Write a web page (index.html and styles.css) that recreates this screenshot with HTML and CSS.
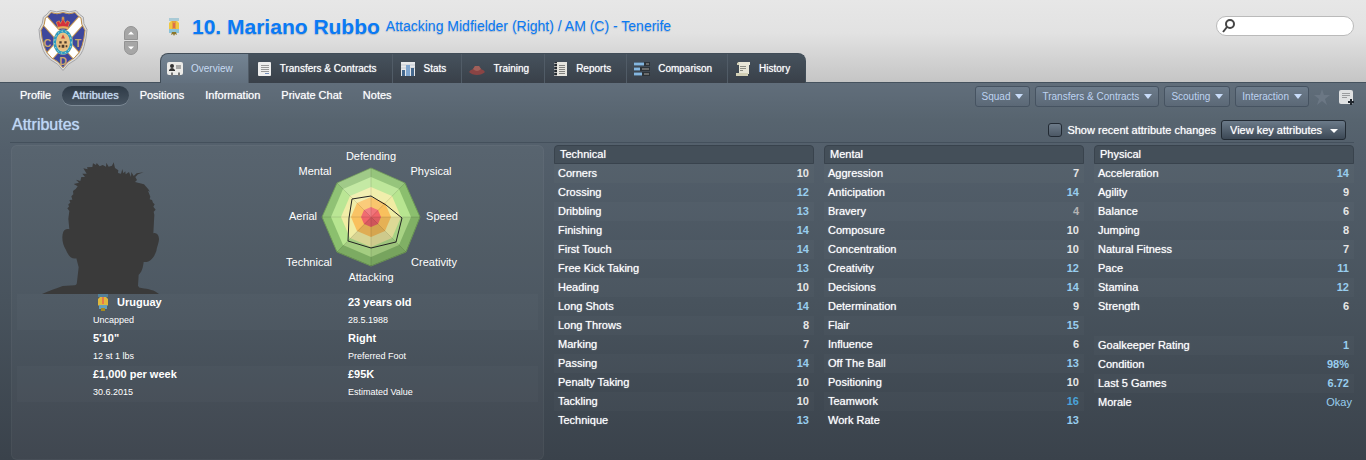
FILE: index.html
```html
<!DOCTYPE html>
<html lang="en">
<head>
  <meta charset="UTF-8">
  <title>Mariano Rubbo - Attributes</title>
  <link rel="stylesheet" href="styles.css">
</head>
<body>
  <header class="top">
    <div class="club">
      <svg class="crest" viewBox="0 0 150 188" aria-hidden="true">
        <path d="M16 24 Q28 16 36 4 Q56 12 75 4 Q94 12 114 4 Q124 17 136 24 Q134 44 147 61 Q145 88 138 112 Q132 137 112 152 Q88 163 75 184 Q62 163 38 152 Q18 137 12 112 Q4 88 3 61 Q16 43 16 24Z" fill="#dcdcdc" stroke="#a5a5a8" stroke-width="3"/>
        <clipPath id="shield"><path d="M22 27 Q32 20 39 10 Q57 18 75 10 Q93 18 111 10 Q118 20 129 27 Q128 46 141 63 Q139 88 132 110 Q126 132 109 146 Q87 157 75 176 Q63 157 41 146 Q24 132 18 110 Q11 88 9 63 Q22 46 22 27Z"/></clipPath>
        <g clip-path="url(#shield)">
          <path d="M0 0H150V188H0Z" fill="#3e479c"/>
          <path d="M8 20L140 168M142 20L10 168" stroke="#c99b55" stroke-width="29"/>
          <path d="M8 20L140 168M142 20L10 168" stroke="#fff" stroke-width="23"/>
        </g>
        <path d="M22 27 Q32 20 39 10 Q57 18 75 10 Q93 18 111 10 Q118 20 129 27 Q128 46 141 63 Q139 88 132 110 Q126 132 109 146 Q87 157 75 176 Q63 157 41 146 Q24 132 18 110 Q11 88 9 63 Q22 46 22 27Z" fill="none" stroke="#c0924f" stroke-width="3"/>
        <ellipse cx="75" cy="99" rx="30" ry="38" fill="#e8c98b"/>
        <ellipse cx="75" cy="99" rx="25" ry="33" fill="none" stroke="#2b9cc4" stroke-width="8"/>
        <ellipse cx="75" cy="99" rx="25" ry="33" fill="none" stroke="#d8e4d0" stroke-width="3" stroke-dasharray="4 8"/>
        <ellipse cx="75" cy="99" rx="19" ry="26" fill="#e9c083"/>
        <path d="M75 76L81 88H69Z" fill="#ca4a3a"/>
        <path d="M64 96h7v7h-7zM79 96h7v7h-7zM71 107h8v9h-8zM62 108h5v6h-5zM83 108h5v6h-5z" fill="#4c3a2b"/>
        <path d="M60 54L55 39L64 35L67 43L72 34V28H78V34L83 43L87 35L95 39L90 54Z" fill="#d5313d" stroke="#e0a44e" stroke-width="2"/>
        <path d="M59 54Q75 49 91 54V60Q75 56 59 60Z" fill="#e7b25e"/>
        <path d="M75 22V33M71 26H79" stroke="#dca14a" stroke-width="3"/>
        <g class="crest-letters"><text x="28" y="113">C</text><text x="120" y="113">T</text><text x="75" y="168">D</text></g>
      </svg>
      <div class="stepper">
        <button aria-label="Previous player"><svg viewBox="0 0 8 4"><path d="M0 4L4 0L8 4Z"/></svg></button>
        <button aria-label="Next player"><svg viewBox="0 0 8 4"><path d="M0 0H8L4 4Z"/></svg></button>
      </div>
    </div>
    <div class="identity">
      <div class="title">
        <svg class="flag" viewBox="0 0 12 18" aria-hidden="true"><path d="M1 0h10v3H1z" fill="#a9cad6"/><path d="M1 5l2-2h6l2 2v6l-2 2H3l-2-2z" fill="#efc843"/><path d="M4 3h4v8H4z" fill="#e7a13c"/><path d="M5 5h2v5H5z" fill="#dc704f"/><path d="M1 11h10v4H1z" fill="#8bc3da"/><path d="M4 14h4l1 3-2-1-1 2-1-2-2 1z" fill="#8b762b"/></svg>
        <h1>10. Mariano Rubbo</h1>
        <p>Attacking Midfielder (Right) / AM (C) - Tenerife</p>
      </div>
      <nav class="tabs">
        <a href="#" class="active"><svg viewBox="0 0 16 14"><rect width="16" height="13" rx="2" fill="#ebebe8"/><circle cx="5" cy="4" r="2" fill="#333"/><path d="M2 8Q5 4 8 8V9H2z" fill="#333"/><path d="M9 4h5M9 6h5" stroke="#666"/><path d="M4 14v-3l1-1 1 1v3M11 14v-3l1-1 1 1v3" fill="#777"/></svg>Overview</a>
        <a href="#"><svg viewBox="0 0 16 16"><rect x="2" y="1" width="13" height="14" rx="1" fill="#eee"/><path d="M5 4.5h8M5 6.5h8M5 8.5h8M5 10.5h8" stroke="#999"/><path d="M9 12.5h4" stroke="#7690bb"/></svg>Transfers &amp; Contracts</a>
        <a href="#"><svg viewBox="0 0 16 16"><path d="M1 1h14v14H1z" fill="#e7e9eb"/><path d="M1 4h14M1 7h14" stroke="#c6cbd1"/><path d="M2 9h3v6H2z" fill="#46698e"/><path d="M6 4h4v11H6z" fill="#7fa5ce"/><path d="M11 7h3v8h-3z" fill="#46698e"/></svg>Stats</a>
        <a href="#"><svg viewBox="0 0 16 16"><path d="M0 11Q1 9 4 8L6 5H10L12 8Q15 9 16 11Q13 14 8 14Q3 14 0 11Z" fill="#8a4444"/><path d="M4 8L6 5H10L12 8Q8 12 4 8Z" fill="#a1605a"/></svg>Training</a>
        <a href="#"><svg viewBox="0 0 16 16"><path d="M4 1h11v14H4z" fill="#e6e5df"/><path d="M3 1h2v14H3z" fill="#252a2f"/><path d="M2 2.5h3M2 5.5h3M2 8.5h3M2 11.5h3M2 14.5h3" stroke="#aaa"/><path d="M7 4.5h6M7 6.5h6M7 8.5h6M7 10.5h6M7 12.5h6" stroke="#81817e"/></svg>Reports</a>
        <a href="#"><svg viewBox="0 0 16 16"><path d="M0 1h16v4H0zM0 6h16v4H0zM0 11h16v4H0z" fill="#2d3338"/><path d="M0 3h10M0 8h6M0 13h8" stroke="#84b6df" stroke-width="3"/><path d="M12 3h3M8 8h7M10 13h5" stroke="#6a6b6a" stroke-width="2"/></svg>Comparison</a>
        <a href="#"><svg viewBox="0 0 16 16"><path d="M3 1h12v3h-1v9H4V4z" fill="#e8e6d7"/><path d="M2 2l2-1v3H2zM1 12h12v3H1z" fill="#d2cfb5"/><path d="M5 5.5h6M5 7.5h6M5 9.5h3" stroke="#8c8c83"/></svg>History</a>
      </nav>
    </div>
    <label class="search">
      <svg viewBox="0 0 14 14" aria-hidden="true"><circle cx="8" cy="5" r="4"/><path d="M5 8L1 13"/></svg>
      <input type="search" aria-label="Search">
    </label>
  </header>

  <main>
    <div class="subbar">
      <nav class="subnav">
        <a href="#">Profile</a>
        <a href="#" class="current">Attributes</a>
        <a href="#">Positions</a>
        <a href="#">Information</a>
        <a href="#">Private Chat</a>
        <a href="#">Notes</a>
      </nav>
      <div class="actions">
        <button class="menu">Squad</button>
        <button class="menu">Transfers &amp; Contracts</button>
        <button class="menu">Scouting</button>
        <button class="menu">Interaction</button>
        <button class="icon" aria-label="Add to shortlist"><svg viewBox="0 0 16 16"><path d="M8 0L10 6H16L11 10L13 16L8 12L3 16L5 10L0 6H6Z" fill="#6b7784"/></svg></button>
        <button class="icon" aria-label="Add note"><svg viewBox="0 0 16 16"><rect x="1" y="1" width="14" height="14" rx="2" fill="#dfe1e2"/><path d="M4 4.5h8M4 6.5h8M4 8.5h5" stroke="#9a9c9e"/><path d="M13 10v6M10 13h6" stroke="#20262d" stroke-width="2"/></svg></button>
      </div>
    </div>

    <div class="heading">
      <h2>Attributes</h2>
      <form class="options">
        <input type="checkbox" id="recent">
        <label for="recent">Show recent attribute changes</label>
        <div class="select">
          <select aria-label="View">
            <option>View key attributes</option>
          </select>
        </div>
      </form>
    </div>

    <div class="content">
      <section class="panel">
        <div class="pictures">
          <svg class="portrait" viewBox="126 66 351 396" aria-hidden="true">
            <path fill="#3a3a3a" d="M126 462C148 452 166 446 188 438L224 436Q231 435 231 425L236 382L229 355C216 359 205 348 198 330C187 314 184 290 190 275C194 267 201 265 208 268L205 236L208 213L202 205L207 200L205 193L211 188L208 180L217 179L214 169L220 163L219 153L227 147L233 139L221 132L237 128L228 119L241 123L244 111L255 111L247 101L260 101L250 85L263 88L261 82L277 81L279 70L288 75L290 69L299 79L308 75L318 80L319 68L326 80L336 77L341 67L345 84L355 91L354 99L363 101L367 87L370 100L376 94L377 103L387 96L393 111L394 96L401 108L410 100L431 97L414 103L406 111L411 120L405 126L432 133L445 148L450 155L444 152L451 170L449 178L456 180L459 188L464 193L460 200L467 209L461 215L463 224L460 280C469 277 476 284 477 296C477 307 472 316 469 333C462 353 450 369 431 366C429 383 425 397 416 404L414 437Q416 444 424 444C446 447 463 450 477 462Z"/>
          </svg>
          <svg class="radar" viewBox="-96 -69 192 142" role="img" aria-label="Attribute polygon">
            <polygon points="0,-49 34,-34 49,0 35,35 0,49 -34,35 -49,0 -34,-34" fill="#8bbf6e" stroke="#6d9857"/>
            <polygon points="0,-40 28,-28 40,0 28,28 0,40 -28,28 -40,0 -28,-28" fill="#b7e590"/>
            <polygon points="0,-30 21,-21 30,0 21,21 0,30 -21,21 -30,0 -21,-21" fill="#f0eca3"/>
            <polygon points="0,-20 14,-14 20,0 14,14 0,20 -14,14 -20,0 -14,-14" fill="#f9c05d"/>
            <polygon points="0,-10 7,-7 10,0 7,7 0,10 -7,7 -10,0 -7,-7" fill="#f0656a"/>
            <g fill="#fff">
              <path d="M0 0L-34 -34L0 -49Z" opacity=".18"/>
              <path d="M0 0L0 -49L34 -34Z" opacity=".1"/>
              <path d="M0 0L-49 0L-34 -34Z" opacity=".05"/>
            </g>
            <g fill="#000">
              <path d="M0 0L49 0L35 35Z" opacity=".08"/>
              <path d="M0 0L35 35L0 49Z" opacity=".14"/>
              <path d="M0 0L0 49L-34 35Z" opacity=".1"/>
            </g>
            <path d="M0 -49V49M-49 0H49M-34 -34L35 35M34 -34L-34 35" stroke="#000" opacity=".1"/>
            <polygon points="0,-21 15,-12 31,1 25,25 0,31 -23,24 -22,1 -19,-18" fill="none" stroke="#222"/>
            <g class="radar-text">
              <text x="0" y="-57">Defending</text>
              <text x="60" y="-42">Physical</text>
              <text x="71" y="3">Speed</text>
              <text x="63" y="49">Creativity</text>
              <text x="0" y="64">Attacking</text>
              <text x="-62" y="49">Technical</text>
              <text x="-68" y="3">Aerial</text>
              <text x="-56" y="-42">Mental</text>
            </g>
          </svg>
        </div>
        <div class="facts">
          <div><strong><svg class="flag" viewBox="0 0 12 18" aria-hidden="true"><path d="M1 0h10v3H1z" fill="#527f99"/><path d="M1 5l2-2h6l2 2v6l-2 2H3l-2-2z" fill="#dfb83d"/><path d="M5 3h2v7H5z" fill="#e8774b"/><path d="M2 11h8v4H2z" fill="#64a0ba"/><path d="M4 14h4v3H4z" fill="#a58a1f"/></svg>Uruguay</strong><small>Uncapped</small></div>
          <div><strong>23 years old</strong><small>28.5.1988</small></div>
          <div><strong>5'10"</strong><small>12 st 1 lbs</small></div>
          <div><strong>Right</strong><small>Preferred Foot</small></div>
          <div><strong>£1,000 per week</strong><small>30.6.2015</small></div>
          <div><strong>£95K</strong><small>Estimated Value</small></div>
        </div>
      </section>

      <table class="attrs">
        <thead><tr><th colspan="2">Technical</th></tr></thead>
        <tbody>
          <tr><td>Corners</td><td>10</td></tr>
          <tr><td>Crossing</td><td class="good">12</td></tr>
          <tr><td>Dribbling</td><td class="good">13</td></tr>
          <tr><td>Finishing</td><td class="good">14</td></tr>
          <tr><td>First Touch</td><td class="good">14</td></tr>
          <tr><td>Free Kick Taking</td><td class="good">13</td></tr>
          <tr><td>Heading</td><td>10</td></tr>
          <tr><td>Long Shots</td><td class="good">14</td></tr>
          <tr><td>Long Throws</td><td>8</td></tr>
          <tr><td>Marking</td><td>7</td></tr>
          <tr><td>Passing</td><td class="good">14</td></tr>
          <tr><td>Penalty Taking</td><td>10</td></tr>
          <tr><td>Tackling</td><td>10</td></tr>
          <tr><td>Technique</td><td class="good">13</td></tr>
        </tbody>
      </table>

      <table class="attrs">
        <thead><tr><th colspan="2">Mental</th></tr></thead>
        <tbody>
          <tr><td>Aggression</td><td>7</td></tr>
          <tr><td>Anticipation</td><td class="good">14</td></tr>
          <tr><td>Bravery</td><td class="low">4</td></tr>
          <tr><td>Composure</td><td>10</td></tr>
          <tr><td>Concentration</td><td>10</td></tr>
          <tr><td>Creativity</td><td class="good">12</td></tr>
          <tr><td>Decisions</td><td class="good">14</td></tr>
          <tr><td>Determination</td><td>9</td></tr>
          <tr><td>Flair</td><td class="good">15</td></tr>
          <tr><td>Influence</td><td>6</td></tr>
          <tr><td>Off The Ball</td><td class="good">13</td></tr>
          <tr><td>Positioning</td><td>10</td></tr>
          <tr><td>Teamwork</td><td class="top-value">16</td></tr>
          <tr><td>Work Rate</td><td class="good">13</td></tr>
        </tbody>
      </table>

      <div class="physical">
        <table class="attrs">
          <thead><tr><th colspan="2">Physical</th></tr></thead>
          <tbody>
            <tr><td>Acceleration</td><td class="good">14</td></tr>
            <tr><td>Agility</td><td>9</td></tr>
            <tr><td>Balance</td><td>6</td></tr>
            <tr><td>Jumping</td><td>8</td></tr>
            <tr><td>Natural Fitness</td><td>7</td></tr>
            <tr><td>Pace</td><td class="good">11</td></tr>
            <tr><td>Stamina</td><td class="good">12</td></tr>
            <tr><td>Strength</td><td>6</td></tr>
          </tbody>
        </table>
        <table class="attrs">
          <tbody>
            <tr><td>Goalkeeper Rating</td><td class="good">1</td></tr>
            <tr><td>Condition</td><td class="good">98%</td></tr>
            <tr><td>Last 5 Games</td><td class="good">6.72</td></tr>
            <tr><td>Morale</td><td class="good mood">Okay</td></tr>
          </tbody>
        </table>
      </div>
    </div>
  </main>
</body>
</html>
```
FILE: styles.css
```css
*{
  box-sizing: border-box;
}
body{
  margin: 0;
  min-height: 100vh;
  display: flex;
  flex-direction: column;
  font: 11px/19px "Liberation Sans", Arial, sans-serif;
  color: #fff;
  background: #3b434c;
}
h1,h2,p{
  margin: 0;
}
a{
  color: inherit;
  text-decoration: none;
}
button,input,select{
  font: inherit;
  color: inherit;
  margin: 0;
  padding: 0;
  border: 0;
}
svg{
  display: block;
  flex: none;
}

/* header */
.top{
  display: flex;
  background: linear-gradient(#e7e7e7, #e2e2e2 40%, #c5c5c5);
  border-bottom: 1px solid #45525e;
}
.club{
  width: 160px;
  display: flex;
  justify-content: space-between;
  align-items: flex-start;
  padding: 9px 22px 0 38px;
}
.crest{
  width: 50px;
  height: 63px;
}
.crest-letters{
  font-size: 32px;
  font-weight: bold;
  text-anchor: middle;
  fill: #c9a56c;
}
.stepper{
  display: grid;
  gap: 1px;
  padding-top: 17px;
}
.stepper button{
  width: 14px;
  height: 14px;
  display: grid;
  place-items: center;
  background: #a6a6a6;
  border: 1px solid #939393;
  border-radius: 7px 7px 0 0;
}
.stepper button:last-child{
  border-radius: 0 0 7px 7px;
}
.stepper svg{
  width: 6px;
  height: 4px;
  fill: #fff;
}
.identity{
  flex: 1;
}
.title{
  height: 53px;
  display: flex;
  align-items: center;
  gap: 6px;
  padding-left: 8px;
  color: #0a7af5;
  text-shadow: 0 1px 1px #a9b4c2;
}
.flag{
  width: 12px;
  height: 18px;
}
.title .flag{
  margin-right: 6px;
}
h1{
  font-size: 21px;
}
.title p{
  font-size: 14px;
}
.tabs{
  display: flex;
  width: max-content;
  height: 30px;
  margin-bottom: -1px;
  border: 1px solid #414d58;
  border-bottom: 0;
  border-radius: 8px 8px 0 0;
  background: linear-gradient(#46525d, #394049);
  overflow: hidden;
  font-size: 10px;
  text-shadow: 0 0 1px #cdd3d9;
}
.tabs a{
  display: flex;
  align-items: center;
  gap: 8px;
  padding: 0 15px 0 7px;
  border-right: 1px solid #515c67;
}
.tabs a:first-child{
  padding-left: 6px;
}
.tabs a:last-child{
  border: 0;
}
.tabs .active{
  color: #c6daf2;
  background: linear-gradient(#748493, #62707e);
  text-shadow: none;
}
.tabs svg{
  width: 16px;
  height: 16px;
}
.search{
  width: 138px;
  height: 20px;
  display: flex;
  align-items: center;
  gap: 4px;
  margin: 16px 12px 0 0;
  padding: 0 8px 0 5px;
  background: #fff;
  border: 1px solid #bababa;
  border-radius: 10px;
}
.search svg{
  width: 14px;
  height: 14px;
  fill: none;
  stroke: #444;
  stroke-width: 2;
}
.search input{
  flex: 1;
  min-width: 0;
  background: none;
  outline: 0;
  color: #333;
}

/* page */
main{
  flex: 1;
  display: flex;
  flex-direction: column;
  background: linear-gradient(#616e7b, #57646f 10%, #535f6b 18%, #48535d 58%, #3a424b);
}
.subbar,.heading{
  display: flex;
  justify-content: space-between;
}
.subbar{
  height: 26px;
  align-items: center;
  padding: 0 12px 1px 10px;
}
.subnav,.actions,.options{
  display: flex;
  align-items: center;
}
.subnav{
  gap: 1px;
  text-shadow: 0 0 1px #cdd3d9;
}
.subnav a{
  padding: 0 10px;
  border-radius: 10px;
}
.subnav .current{
  color: #c1daf5;
  background: linear-gradient(#2e3a46, #475461);
  box-shadow: 0 1px 0 #7c8995;
}
.actions{
  gap: 5px;
  padding-top: 2px;
}
.menu{
  height: 21px;
  display: flex;
  align-items: center;
  gap: 5px;
  padding: 0 6px;
  font-size: 10px;
  color: #bed3f1;
  background: linear-gradient(#6d7c8b, #5b6876);
  border: 1px solid #465361;
  border-radius: 3px;
}
.menu::after,.select::after{
  content: "";
  border: 4px solid transparent;
  border-top: 5px solid #c9ddfa;
  border-bottom: 0;
}
.icon{
  width: 16px;
  height: 16px;
  background: none;
}
.icon:last-child{
  margin-left: 3px;
}
.heading{
  height: 34px;
  align-items: flex-start;
  margin: 0 12px 2px 10px;
  padding: 6px 8px 0 2px;
  border-bottom: 1px solid #44505c;
}
h2{
  font-size: 16px;
  font-weight: normal;
  color: #bcd6f5;
  text-shadow: 0 0 1px #bcd6f5;
}
.options{
  gap: 5px;
  padding-top: 5px;
}
.options label{
  text-shadow: 0 0 1px #cdd3d9;
}
.options input{
  appearance: none;
  width: 14px;
  height: 14px;
  border: 1px solid #222a33;
  border-radius: 3px;
  background: linear-gradient(#6d7b89, #4c5865);
}
.select{
  display: grid;
  position: relative;
}
.select::after{
  position: absolute;
  right: 8px;
  top: 9px;
  border-width: 4px 4px 0;
  border-top-color: #fff;
  pointer-events: none;
}
select{
  appearance: none;
  height: 20px;
  padding: 0 22px 0 8px;
  border: 1px solid #222a33;
  border-radius: 3px;
  background: linear-gradient(#6b7a89, #3c4855);
  text-shadow: 0 0 1px #cdd3d9;
}

/* columns */
.content{
  flex: 1;
  display: grid;
  grid-template-columns: 533fr 260fr 260fr 260fr;
  gap: 10px;
  padding: 0 12px 0 11px;
}
.panel{
  padding: 0 5px;
  background: rgba(255,255,255,.03);
  border: 1px solid rgba(255,255,255,.04);
  border-radius: 6px;
}
.pictures{
  height: 148px;
  display: flex;
  align-items: flex-end;
  gap: 116px;
  padding-left: 25px;
}
.portrait{
  width: 117px;
  height: 132px;
}
.radar{
  width: 192px;
  height: 142px;
  margin-bottom: 4px;
}
.radar-text{
  fill: #fff;
  text-anchor: middle;
}
.facts{
  display: grid;
  grid-template-columns: 331fr 190fr;
}
.facts div{
  height: 36px;
}
.facts div:nth-child(odd){
  padding-left: 76px;
}
.facts div:nth-child(4n+1),.facts div:nth-child(4n+2){
  background: rgba(255,255,255,.02);
}
.facts strong{
  display: flex;
  align-items: center;
  gap: 8px;
  line-height: 17px;
  height: 17px;
}
.facts .flag{
  margin-left: 4px;
}
.facts small{
  display: block;
  font-size: 9px;
  line-height: 19px;
}
.attrs{
  width: 100%;
  align-self: start;
  border-collapse: separate;
  border-spacing: 0;
}
.attrs th{
  height: 19px;
  padding: 0 5px;
  line-height: 17px;
  font-weight: normal;
  text-align: left;
  background: #444f59;
  border: 1px solid #39434d;
  border-radius: 4px 4px 0 0;
  text-shadow: 0 0 1px #cdd3d9;
}
.attrs td{
  height: 19px;
  padding: 0 4px;
  text-shadow: 0 0 1px #cdd3d9;
}
.attrs td:last-child{
  padding-right: 5px;
  text-align: right;
  font-weight: bold;
  color: #e6e6e6;
  text-shadow: none;
}
.attrs tr:nth-child(odd) td{
  background: rgba(255,255,255,.02);
}
.attrs .good:last-child{
  color: #98cdee;
}
.attrs .top-value:last-child{
  color: #4aa3da;
}
.attrs .low:last-child{
  color: #b4b4b4;
}
.attrs .mood:last-child{
  padding-right: 2px;
  font-weight: normal;
}
.physical .attrs + .attrs{
  margin-top: 20px;
}
```
